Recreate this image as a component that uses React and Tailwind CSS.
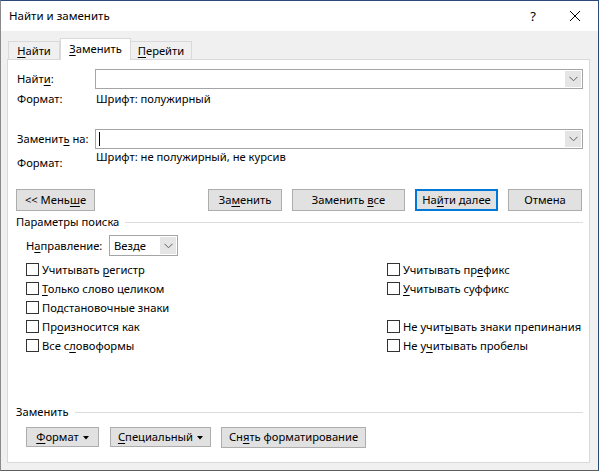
import React from 'react';

function Chevron() {
  return (
    <svg width="9" height="6" viewBox="0 0 9 6" className="block">
      <polyline points="0.5,0.8 4.5,4.8 8.5,0.8" fill="none" stroke="#606060" strokeWidth="1" />
    </svg>
  );
}

function Caret() {
  return (
    <svg width="6" height="4" viewBox="0 0 6 4" className="ml-[4px] inline-block align-middle">
      <polygon points="0,0 6,0 3,3.5" fill="#000" />
    </svg>
  );
}

function U({ children }) {
  return <span className="underline underline-offset-[2px] decoration-[1px]">{children}</span>;
}

function Combo({ className, cursor }) {
  return (
    <div className={`flex h-[20px] w-[488px] items-stretch border border-[#a5a5a5] bg-white ${className || ''}`}>
      <div className="flex flex-1 items-center pl-[3px]">
        {cursor && <div className="h-[14px] w-px bg-black" />}
      </div>
      <div className="m-[1px] flex w-[16px] items-center justify-center bg-[#e5e5e5]">
        <Chevron />
      </div>
    </div>
  );
}

function Btn({ children, className, primary }) {
  return (
    <div
      className={`flex items-center justify-center whitespace-nowrap bg-[#e1e1e1] ${
        primary ? 'border-2 border-[#0078d7]' : 'border border-[#adadad]'
      } ${className || ''}`}
    >
      <span>{children}</span>
    </div>
  );
}

function Check({ children }) {
  return (
    <div className="flex h-[19px] items-center whitespace-nowrap">
      <div className="h-[13px] w-[13px] border border-[#333] bg-white" />
      <span className="ml-[3px]">{children}</span>
    </div>
  );
}

function Section({ children }) {
  return (
    <div className="flex h-[16px] items-center pr-[6px]">
      <span>{children}</span>
      <div className="ml-[6px] h-px flex-1 bg-[#dcdcdc]" />
    </div>
  );
}

export default function App() {
  return (
    <div
      className="flex h-[471px] w-[599px] flex-col overflow-hidden border border-l-[#8a8a8a] border-b-[#5e5e5e] border-t-[#2b4a7a] border-r-[#2b4a7a] bg-[#f0f0f0] text-[11.2px] leading-[16px] text-black"
      style={{ fontFamily: '"Segoe UI", "Noto Sans", sans-serif' }}
    >
      {/* title bar */}
      <div className="flex h-[30px] items-center bg-white pl-[8px]">
        <span className="flex-1 text-[11.5px]">Найти и заменить</span>
        <span className="mr-[33px] text-[13px]">?</span>
        <svg width="12" height="12" viewBox="0 0 12 12" className="mr-[17px]">
          <path d="M1 1 L11 11 M11 1 L1 11" stroke="#000" strokeWidth="1" />
        </svg>
      </div>

      {/* tabs */}
      <div className="mt-[7px] flex h-[21px] items-end pl-[7px]">
        <div className="flex h-[18px] w-[52px] items-center justify-center border border-b-0 border-[#d9d9d9] bg-[#f0f0f0]">
          <span><U>Н</U>айти</span>
        </div>
        <div className="relative z-10 -mb-px flex h-[22px] w-[71px] items-center justify-center border border-b-0 border-[#d9d9d9] bg-white pb-[1px]">
          <span><U>З</U>аменить</span>
        </div>
        <div className="flex h-[18px] w-[61px] items-center justify-center border border-b-0 border-l-0 border-[#d9d9d9] bg-[#f0f0f0]">
          <span><U>П</U>ерейти</span>
        </div>
      </div>

      {/* panel */}
      <div className="mb-[7px] ml-[6px] mr-[8px] flex flex-1 flex-col border border-[#d9d9d9] bg-white pl-[8px]">
        <div className="mt-[9px] flex h-[20px] items-center">
          <div className="w-[79px] pl-[1px]">Найт<U>и</U>:</div>
          <Combo />
        </div>
        <div className="mt-[2px] flex h-[16px] items-center">
          <div className="w-[79px] pl-[1px]">Формат:</div>
          <div className="pl-[1px]">Шрифт: полужирный</div>
        </div>

        <div className="mt-[22px] flex h-[20px] items-center">
          <div className="w-[79px] pl-[1px]">Заменит<U>ь</U> на:</div>
          <Combo cursor />
        </div>
        <div className="flex items-start">
          <div className="mt-[6px] w-[79px] pl-[1px]">Формат:</div>
          <div className="pl-[1px]">Шрифт: не полужирный, не курсив</div>
        </div>

        <div className="mt-[18px] flex h-[22px] items-stretch">
          <Btn className="w-[79px]">&lt;&lt; Мень<U>ш</U>е</Btn>
          <Btn className="ml-[113px] w-[74px]">За<U>м</U>енить</Btn>
          <Btn className="ml-[10px] w-[113px]">Заменить <U>в</U>се</Btn>
          <Btn primary className="ml-[10px] w-[83px]">На<U>й</U>ти далее</Btn>
          <Btn className="ml-[10px] w-[74px]">Отмена</Btn>
        </div>

        <div className="mt-[3px]">
          <Section>Параметры поиска</Section>
        </div>

        <div className="mt-[5px] flex h-[21px] items-center pl-[10px]">
          <div className="w-[83px]">Н<U>а</U>правление:</div>
          <div className="flex h-[21px] w-[69px] items-stretch border border-[#a5a5a5] bg-white">
            <div className="flex flex-1 items-center pl-[4px]">Везде</div>
            <div className="m-[1px] flex w-[16px] items-center justify-center bg-[#e5e5e5]">
              <Chevron />
            </div>
          </div>
        </div>

        <div className="mt-[4px] grid grid-cols-[361px_1fr] pl-[10px]">
          <Check>Учитывать <U>р</U>егистр</Check>
          <Check>Учитывать пр<U>е</U>фикс</Check>
          <Check><U>Т</U>олько слово целиком</Check>
          <Check><U>У</U>читывать суффикс</Check>
          <Check>Подстановочные знаки</Check>
          <div />
          <Check>Пр<U>о</U>износится как</Check>
          <Check>Не учит<U>ы</U>вать знаки препинания</Check>
          <Check>Все с<U>л</U>овоформы</Check>
          <Check>Не у<U>ч</U>итывать пробелы</Check>
        </div>

        <div className="mt-[49px]">
          <Section>Заменить</Section>
        </div>

        <div className="mt-[6px] flex h-[22px] items-center pl-[10px]">
          <Btn className="h-[20px] w-[73px]"><U>Ф</U>ормат<Caret /></Btn>
          <Btn className="ml-[11px] h-[20px] w-[101px]"><U>С</U>пециальный<Caret /></Btn>
          <Btn className="ml-[10px] h-[21px] w-[145px]">Сн<U>я</U>ть форматирование</Btn>
        </div>
      </div>
    </div>
  );
}
